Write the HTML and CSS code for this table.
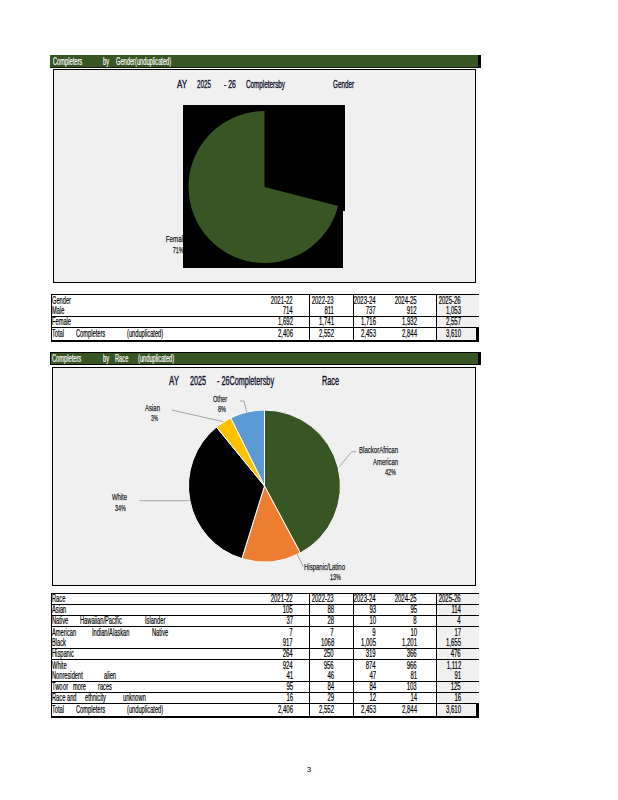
FILE: index.html
```html
<!DOCTYPE html>
<html lang="en">
<head>
<meta charset="utf-8">
<title>Completers</title>
<link rel="stylesheet" href="styles.css">
</head>
<body>
<div class="page">

  <div class="bar bar-gender"><span class="w50">Completers</span><span class="w13">by</span><span>Gender(unduplicated)</span></div>

  <div class="chart chart-gender">
    <svg class="plot" viewBox="0 0 421 212" width="421" height="212">
      <g class="title t1">
        <text x="123" y="18" textLength="10" lengthAdjust="spacingAndGlyphs">AY</text>
        <text x="143" y="18" textLength="14" lengthAdjust="spacingAndGlyphs">2025</text>
        <text x="170" y="18" textLength="12" lengthAdjust="spacingAndGlyphs">- 26</text>
        <text x="192" y="18" textLength="39" lengthAdjust="spacingAndGlyphs">Completersby</text>
        <text x="279" y="18" textLength="21" lengthAdjust="spacingAndGlyphs">Gender</text>
      </g>
      <g class="lbl">
        <text x="111.7" y="171.7" textLength="21" lengthAdjust="spacingAndGlyphs">Female</text>
        <text x="118.7" y="182.7" textLength="11" lengthAdjust="spacingAndGlyphs">71%</text>
      </g>
      <rect x="129" y="35" width="160" height="163" fill="#000"/>
      <rect x="212" y="35" width="79" height="106" fill="#000"/>
      <path d="M210.5,117 L284.1,135.9 A76,76 0 1 1 210.5,41 Z" fill="#375623"/>
    </svg>
  </div>

  <div class="tbl tbl-gender">
    <div class="row"><div class="lab"><span>Gender</span></div><div class="c c1"><span>2021-22</span></div><div class="c c2"><span>2022-23</span></div><div class="c c3"><span>2023-24</span></div><div class="c c4"><span>2024-25</span></div><div class="c c5"><span>2025-26</span></div></div>
    <div class="row ln"><div class="lab"><span>Male</span></div><div class="c c1"><span>714</span></div><div class="c c2"><span>811</span></div><div class="c c3"><span>737</span></div><div class="c c4"><span>912</span></div><div class="c c5"><span>1,053</span></div></div>
    <div class="row ln"><div class="lab"><span>Female</span></div><div class="c c1"><span>1,692</span></div><div class="c c2"><span>1,741</span></div><div class="c c3"><span>1,716</span></div><div class="c c4"><span>1,932</span></div><div class="c c5"><span>2,557</span></div></div>
    <div class="row tot"><div class="lab"><span class="w24">Total</span><span class="w51">Completers</span><span>(unduplicated)</span></div><div class="c c1"><span>2,406</span></div><div class="c c2"><span>2,552</span></div><div class="c c3"><span>2,453</span></div><div class="c c4"><span>2,844</span></div><div class="c c5"><span>3,610</span></div></div>
  </div>

  <div class="bar bar-race"><span class="w51">Completers</span><span class="w12">by</span><span class="w23">Race</span><span>(unduplicated)</span></div>

  <div class="chart chart-race">
    <svg class="plot" viewBox="0 0 422 217" width="422" height="217">
      <g class="title t2">
        <text x="116" y="17" textLength="10" lengthAdjust="spacingAndGlyphs">AY</text>
        <text x="137" y="17" textLength="16" lengthAdjust="spacingAndGlyphs">2025</text>
        <text x="164" y="17" textLength="57" lengthAdjust="spacingAndGlyphs">- 26Completersby</text>
        <text x="269" y="17" textLength="17" lengthAdjust="spacingAndGlyphs">Race</text>
      </g>
      <g class="pie">
        <path d="M211.5,118 L211.5,42 A76,76 0 0 1 247.3,185 Z" fill="#375623"/>
        <path d="M211.5,118 L247.3,185 A76,76 0 0 1 188.9,190.6 Z" fill="#ed7d31"/>
        <path d="M211.5,118 L188.9,190.6 A76,76 0 0 1 163.5,59.1 Z" fill="#000000"/>
        <path d="M211.5,118 L163.5,59.1 A76,76 0 0 1 177.8,49.9 Z" fill="#ffc000"/>
        <path d="M211.5,118 L177.8,49.9 A76,76 0 0 1 211.5,42 Z" fill="#5b9bd5"/>
      </g>
      <g class="lead">
        <polyline points="286.3,98.7 298.7,83.7 303,83.7"/>
        <polyline points="243.7,185.3 250.3,198.7"/>
        <polyline points="86.3,132.7 136.3,132.7"/>
        <polyline points="118.7,42 170.3,53.7"/>
        <polyline points="187,33 191,33 193.7,44.3"/>
      </g>
      <g class="lbl">
        <text x="306" y="85" textLength="39" lengthAdjust="spacingAndGlyphs">BlackorAfrican</text>
        <text x="320" y="97" textLength="25" lengthAdjust="spacingAndGlyphs">American</text>
        <text x="332" y="107" textLength="11" lengthAdjust="spacingAndGlyphs">42%</text>
        <text x="251" y="202" textLength="41" lengthAdjust="spacingAndGlyphs">Hispanic/Latino</text>
        <text x="277" y="212" textLength="11" lengthAdjust="spacingAndGlyphs">13%</text>
        <text x="59" y="132" textLength="15" lengthAdjust="spacingAndGlyphs">White</text>
        <text x="62" y="143" textLength="11" lengthAdjust="spacingAndGlyphs">34%</text>
        <text x="92" y="43" textLength="15" lengthAdjust="spacingAndGlyphs">Asian</text>
        <text x="98" y="53" textLength="7" lengthAdjust="spacingAndGlyphs">3%</text>
        <text x="160" y="34" textLength="14" lengthAdjust="spacingAndGlyphs">Other</text>
        <text x="165" y="44" textLength="8" lengthAdjust="spacingAndGlyphs">8%</text>
      </g>
    </svg>
  </div>

  <div class="tbl tbl-race">
    <div class="row ln"><div class="lab"><span>Race</span></div><div class="c c1"><span>2021-22</span></div><div class="c c2"><span>2022-23</span></div><div class="c c3"><span>2023-24</span></div><div class="c c4"><span>2024-25</span></div><div class="c c5"><span>2025-26</span></div></div>
    <div class="row ln"><div class="lab"><span>Asian</span></div><div class="c c1"><span>105</span></div><div class="c c2"><span>88</span></div><div class="c c3"><span>93</span></div><div class="c c4"><span>95</span></div><div class="c c5"><span>114</span></div></div>
    <div class="row ln"><div class="lab"><span class="w28">Native</span><span class="w65">Hawaiian/Pacific</span><span>Islander</span></div><div class="c c1"><span>37</span></div><div class="c c2"><span>28</span></div><div class="c c3"><span>10</span></div><div class="c c4"><span>8</span></div><div class="c c5"><span>4</span></div></div>
    <div class="row"><div class="lab"><span class="w40">American</span><span class="w60">Indian/Alaskan</span><span>Native</span></div><div class="c c1"><span>7</span></div><div class="c c2"><span>7</span></div><div class="c c3"><span>9</span></div><div class="c c4"><span>10</span></div><div class="c c5"><span>17</span></div></div>
    <div class="row ln"><div class="lab"><span>Black</span></div><div class="c c1"><span>917</span></div><div class="c c2"><span>1068</span></div><div class="c c3"><span>1,005</span></div><div class="c c4"><span>1,201</span></div><div class="c c5"><span>1,655</span></div></div>
    <div class="row ln"><div class="lab"><span>Hispanic</span></div><div class="c c1"><span>264</span></div><div class="c c2"><span>250</span></div><div class="c c3"><span>319</span></div><div class="c c4"><span>366</span></div><div class="c c5"><span>476</span></div></div>
    <div class="row"><div class="lab"><span>White</span></div><div class="c c1"><span>924</span></div><div class="c c2"><span>956</span></div><div class="c c3"><span>874</span></div><div class="c c4"><span>966</span></div><div class="c c5"><span>1,112</span></div></div>
    <div class="row ln"><div class="lab"><span class="w52">Nonresident</span><span>alien</span></div><div class="c c1"><span>41</span></div><div class="c c2"><span>46</span></div><div class="c c3"><span>47</span></div><div class="c c4"><span>81</span></div><div class="c c5"><span>91</span></div></div>
    <div class="row ln"><div class="lab"><span class="w11">Two</span><span class="w10">or</span><span class="w25">more</span><span>races</span></div><div class="c c1"><span>95</span></div><div class="c c2"><span>84</span></div><div class="c c3"><span>84</span></div><div class="c c4"><span>103</span></div><div class="c c5"><span>125</span></div></div>
    <div class="row ln"><div class="lab"><span class="w15">Race</span><span class="w18">and</span><span class="w38">ethnicity</span><span>unknown</span></div><div class="c c1"><span>16</span></div><div class="c c2"><span>29</span></div><div class="c c3"><span>12</span></div><div class="c c4"><span>14</span></div><div class="c c5"><span>16</span></div></div>
    <div class="row tot"><div class="lab"><span class="w24">Total</span><span class="w51">Completers</span><span>(unduplicated)</span></div><div class="c c1"><span>2,406</span></div><div class="c c2"><span>2,552</span></div><div class="c c3"><span>2,453</span></div><div class="c c4"><span>2,844</span></div><div class="c c5"><span>3,610</span></div></div>
  </div>

  <div class="pnum">3</div>
</div>
</body>
</html>
```

FILE: styles.css
```css
html, body {
  margin: 0;
  padding: 0;
  background: #ffffff;
}

body {
  width: 618px;
  font-family: "Liberation Sans", Arial, sans-serif;
  font-size: 10px;
  color: #000000;
}

.page {
  padding-top: 55px;
  display: flex;
  flex-direction: column;
  align-items: flex-start;
}

/* condensed glyphs: the source uses a very narrow face */
.bar span,
.lab span {
  display: inline-block;
  flex: none;
  transform: scaleX(0.57);
  transform-origin: 0 50%;
  white-space: nowrap;
  -webkit-text-stroke: 0.2px currentColor;
}

.c span {
  display: inline-block;
  flex: none;
  transform: scaleX(0.6);
  transform-origin: 100% 50%;
  white-space: nowrap;
  -webkit-text-stroke: 0.2px currentColor;
}

/* section header bars */
.bar {
  display: flex;
  align-items: center;
  box-sizing: border-box;
  background: #375623;
  color: #ffffff;
  line-height: 11px;
  white-space: nowrap;
}

.bar-gender {
  margin-left: 50px;
  width: 431px;
  height: 13px;
  padding-left: 3px;
  border-right: 3px solid #000;
  border-bottom: 1px solid #111a0a;
}

.bar-race {
  margin-left: 50px;
  margin-top: 10px;
  width: 431px;
  height: 13px;
  padding-left: 1px;
  border: 1px solid #000;
  border-right-width: 3px;
}

/* word slots reproducing the justified spacing (layout width, before scaling) */
.w10 { width: 10px; }
.w11 { width: 11px; }
.w12 { width: 12px; }
.w13 { width: 13px; }
.w15 { width: 15px; }
.w18 { width: 18px; }
.w23 { width: 23px; }
.w24 { width: 24px; }
.w25 { width: 25px; }
.w28 { width: 28px; }
.w38 { width: 38px; }
.w40 { width: 40px; }
.w50 { width: 50px; }
.w51 { width: 51px; }
.w52 { width: 52px; }
.w60 { width: 60px; }
.w65 { width: 65px; }

/* chart panels */
.chart {
  box-sizing: border-box;
  background: #f0f0f0;
  border: 1px solid #000;
}

.chart-gender {
  margin-left: 53px;
  margin-top: 1px;
  width: 423px;
  height: 214px;
}

.chart-race {
  margin-left: 52px;
  margin-top: 2px;
  width: 424px;
  height: 219px;
}

.plot {
  display: block;
  font-family: "Liberation Sans", Arial, sans-serif;
}

.title text {
  fill: #10102e;
  stroke: #10102e;
  stroke-width: 0.35;
}

.t1 text { font-size: 11px; }
.t2 text { font-size: 12px; }

.lbl text {
  font-size: 9.5px;
  fill: #1e1e1e;
  stroke: #1e1e1e;
  stroke-width: 0.25;
}

.pie path {
  stroke: #ffffff;
  stroke-width: 1;
  stroke-linejoin: round;
}

.lead polyline {
  fill: none;
  stroke: #a6a6a6;
  stroke-width: 1;
}

/* data tables */
.tbl {
  margin-left: 51px;
  border-top: 1px solid #000;
  border-left: 1px solid #000;
}

.tbl-gender { margin-top: 11px; }
.tbl-race { margin-top: 7px; }

.row {
  display: grid;
  grid-template-columns: 203px 55px 44px 42px 41px 42px;
  box-sizing: border-box;
  height: 11px;
  line-height: 11px;
  white-space: nowrap;
}

.row.ln {
  border-bottom: 1px solid #000;
  line-height: 10px;
}

.row.tot {
  height: 14px;
  line-height: 12px;
  border-bottom: 2px solid #000;
}

.lab {
  display: flex;
  overflow: hidden;
}

.c {
  box-sizing: border-box;
  display: flex;
  justify-content: flex-end;
  min-width: 0;
}

.c1 { border-right: 1px solid #000; padding-right: 16px; }
.c2 { border-right: 1px solid #000; padding-right: 19px; }
.c3 { padding-right: 20px; }
.c4 { border-right: 1px solid #000; padding-right: 19px; }
.c5 { background: #f0f0f0; padding-right: 18px; }
.tot .c5 { border-right: 3px solid #000; padding-right: 15px; }

.pnum {
  align-self: stretch;
  margin-top: 47px;
  text-align: center;
  font-size: 8px;
  line-height: 10px;
}
```
